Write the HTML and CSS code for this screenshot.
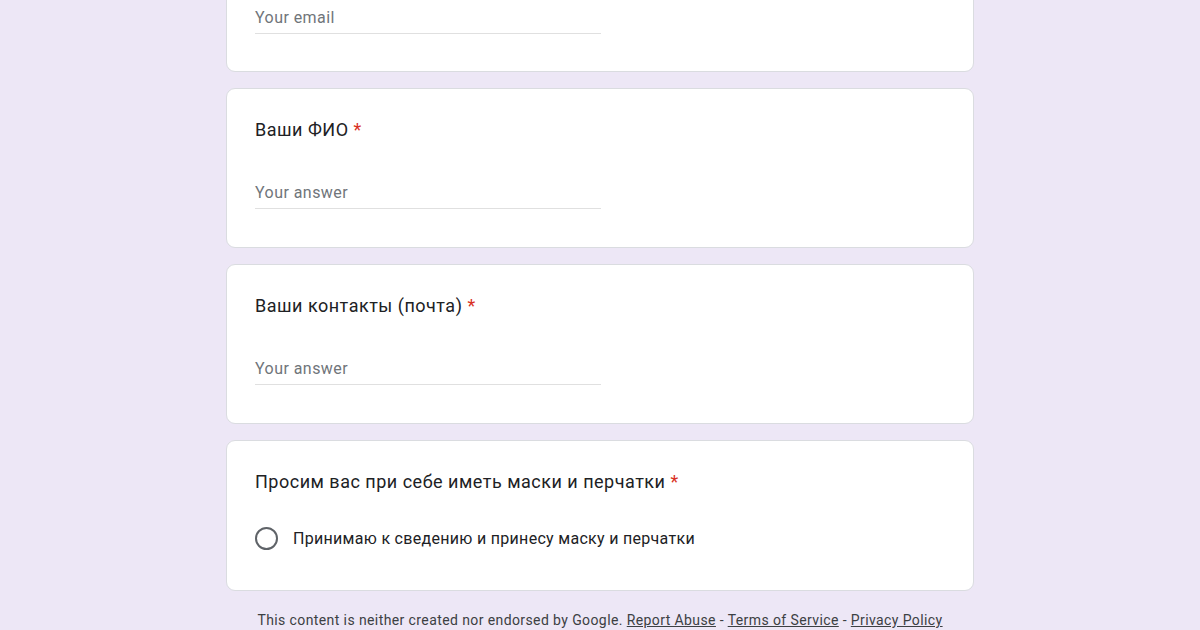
FILE: index.html
```html
<!DOCTYPE html>
<html lang="ru">
  <head>
    <meta charset="UTF-8" />
    <meta name="viewport" content="width=device-width, initial-scale=1.0" />
    <title>Форма</title>
    <link rel="stylesheet" href="styles.css">
  </head>

  <body>
    <div class="form">
      <div class="card">
        <div class="answer">Your email</div>
      </div>

      <div class="card">
        <div class="title">Ваши ФИО <span class="req">*</span></div>
        <div class="answer">Your answer</div>
      </div>

      <div class="card">
        <div class="title">Ваши контакты (почта) <span class="req">*</span></div>
        <div class="answer">Your answer</div>
      </div>

      <div class="card radio-card">
        <div class="title">Просим вас при себе иметь маски и перчатки <span class="req">*</span></div>
        <label class="option">
          <span class="radio"></span>
          <span>Принимаю к сведению и принесу маску и перчатки</span>
        </label>
      </div>

      <div class="footer">
        This content is neither created nor endorsed by Google.
        <a href="#">Report Abuse</a> - <a href="#">Terms of Service</a> - <a href="#">Privacy Policy</a>
      </div>
    </div>
  </body>
</html>
```

FILE: styles.css
```css
body {
  margin: 0;
  background-color: #ede7f6;
  font-family: Roboto, "Noto Sans", Arial, sans-serif;
  color: #202124;
  overflow: hidden;
}

.form {
  width: 748px;
  margin: -63px auto 0;
  display: flex;
  flex-direction: column;
  gap: 16px;
}

.card {
  background-color: #fff;
  border: 1px solid #dadce0;
  border-radius: 9px;
  padding: 29px 28px 38px;
}

.title {
  font-size: 18px;
  line-height: 24px;
  letter-spacing: 0.5px;
}

.req {
  color: #d93025;
}

.answer {
  width: 346px;
  margin-top: 35px;
  height: 31px;
  line-height: 32px;
  font-size: 16px;
  letter-spacing: 0.45px;
  color: #70757a;
  border-bottom: 1px solid #e0e0e0;
}

.card:first-child {
  padding-bottom: 37px;
}

.radio-card {
  padding-bottom: 40px;
}

.option {
  display: flex;
  align-items: center;
  gap: 15px;
  margin-top: 33px;
  font-size: 16px;
  letter-spacing: 0.3px;
}

.radio {
  width: 19px;
  height: 19px;
  border: 2px solid #5f6368;
  border-radius: 50%;
}

.footer {
  text-align: center;
  font-size: 14px;
  letter-spacing: 0.4px;
  color: #3c4043;
  margin-top: 5px;
}

.footer a {
  color: #3c4043;
}
```
